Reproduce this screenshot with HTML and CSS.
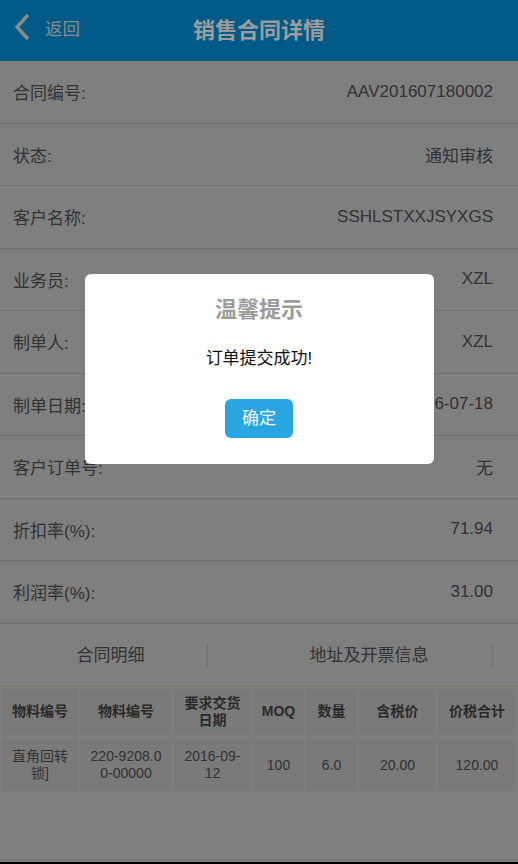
FILE: index.html
```html
<!DOCTYPE html>
<html lang="zh-CN">

<head>
  <meta charset="UTF-8">
  <title>销售合同详情</title>
  <link rel="stylesheet" href="styles.css">
</head>

<body>
  <!--顶部导航-->
  <div class="top">
    <a class="back" href="#">
      <svg width="18" height="28" viewBox="0 0 18 28"><polyline points="15,2 4,14 15,26" fill="none" stroke="#8a8a8a" stroke-width="3.5"/></svg>
      <span>返回</span>
    </a>
    <h1>销售合同详情</h1>
  </div>

  <!--合同基本信息-->
  <ul class="info">
    <li><span>合同编号:</span><em>AAV201607180002</em></li>
    <li><span>状态:</span><em>通知审核</em></li>
    <li><span>客户名称:</span><em>SSHLSTXXJSYXGS</em></li>
    <li><span>业务员:</span><em>XZL</em></li>
    <li><span>制单人:</span><em>XZL</em></li>
    <li><span>制单日期:</span><em>2016-07-18</em></li>
    <li><span>客户订单号:</span><em>无</em></li>
    <li><span>折扣率(%):</span><em>71.94</em></li>
    <li><span>利润率(%):</span><em>31.00</em></li>
  </ul>

  <div class="tabs">
    <a class="tab first" href="#">合同明细</a>
    <a class="tab second" href="#">地址及开票信息</a>
  </div>

  <table class="goods">
    <colgroup>
      <col style="width:76px">
      <col style="width:92px">
      <col style="width:77px">
      <col style="width:51px">
      <col style="width:51px">
      <col style="width:77px">
      <col style="width:78px">
    </colgroup>
    <tr>
      <th>物料编号</th>
      <th>物料编号</th>
      <th>要求交货日期</th>
      <th>MOQ</th>
      <th>数量</th>
      <th>含税价</th>
      <th>价税合计</th>
    </tr>
    <tr>
      <td>直角回转锁]</td>
      <td>220-9208.00-00000</td>
      <td>2016-09-12</td>
      <td>100</td>
      <td>6.0</td>
      <td>20.00</td>
      <td>120.00</td>
    </tr>
  </table>

  <div class="bottom-bar"></div>

  <!--遮罩和提示框-->
  <div class="mask">
    <div class="dialog">
      <h2>温馨提示</h2>
      <p>订单提交成功!</p>
      <a class="ok" href="#">确定</a>
    </div>
  </div>
</body>

</html>
```
FILE: styles.css
```css
* {
  margin: 0;
  padding: 0
}

ul {
  list-style: none
}

a {
  text-decoration: none
}

body {
  font-family: "Liberation Sans", "Noto Sans CJK SC", sans-serif;
  background-color: #fff;
  color: #666;
  height: 864px;
  overflow: hidden;
}

.top {
  height: 55px;
  padding-bottom: 6px;
  background-color: #005a87;
  display: flex;
  align-items: center;
  justify-content: center;
  position: relative;
  z-index: 20;
}

.top h1 {
  font-size: 22px;
  color: #9c9c9c;
  font-weight: bold;
}

.back {
  position: absolute;
  left: 13px;
  top: 13px;
  display: flex;
  align-items: center;
  gap: 14px;
  font-size: 17.5px;
  color: #8a8a8a;
}

.back svg {
  display: block;
}

.info li {
  height: 61.5px;
  border-bottom: 1px solid #dcdcdc;
  padding: 0 25px 0 13px;
  display: flex;
  align-items: center;
  justify-content: space-between;
  font-size: 17px;
}

.info em {
  font-style: normal;
}

.tabs {
  display: flex;
  padding: 19px 0 18px;
  border-bottom: 1px solid #f6e6a8;
}

.tab {
  height: 25px;
  line-height: 25px;
  font-size: 17px;
  color: #666;
  text-align: center;
  border-right: 1px solid #dcdcdc;
}

.tab.first {
  width: 193px;
  padding-left: 14px;
}

.tab.second {
  width: 246px;
  padding-left: 38px;
}

.goods {
  width: 518px;
  table-layout: fixed;
  border-spacing: 2px;
}

.goods th,
.goods td {
  background-color: #f4f4f4;
  text-align: center;
  font-size: 14px;
  line-height: 17px;
  color: #555;
}

.goods th {
  height: 46px;
  padding: 0 6px;
  font-weight: bold;
  border-bottom: 3px solid #fff;
}

.goods td {
  height: 51px;
  padding: 0 8px;
  color: #666;
  word-break: break-all;
}

.bottom-bar {
  position: fixed;
  left: 0;
  right: 0;
  bottom: 0;
  height: 2px;
  background-color: #000;
  box-shadow: 0 -3px 0 #eee;
}

.mask {
  position: fixed;
  top: 61px;
  left: 0;
  right: 0;
  bottom: 0;
  background-color: rgba(0, 0, 0, .5);
  z-index: 10;
  display: flex;
  justify-content: center;
  align-items: flex-start;
  padding-top: 213px;
}

.dialog {
  width: 349px;
  padding: 24px 0 26px;
  background-color: #fff;
  border-radius: 6px;
  text-align: center;
}

.dialog h2 {
  font-size: 22px;
  line-height: 24px;
  color: #9c9c9c;
}

.dialog p {
  margin-top: 25px;
  font-size: 17px;
  line-height: 24px;
  color: #111;
}

.dialog .ok {
  display: block;
  width: 68px;
  height: 39px;
  line-height: 39px;
  margin: 28px auto 0;
  background-color: #29a6e2;
  border-radius: 6px;
  color: #fff;
  font-size: 17px;
}
```
